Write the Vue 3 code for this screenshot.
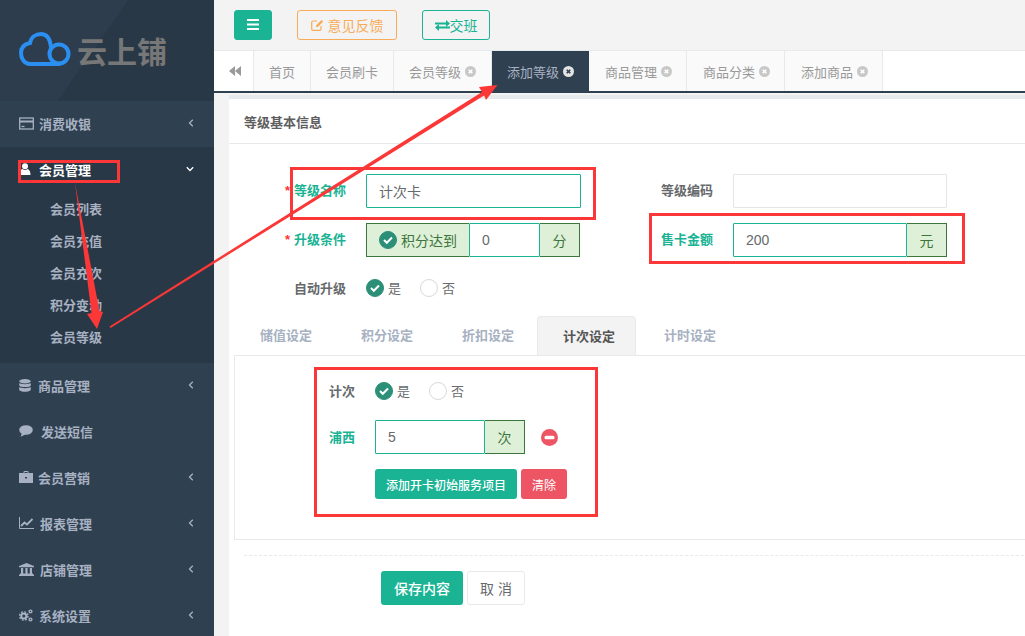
<script setup>
const menus = [
  { name: '商品管理', icon: 'db', gap: 7, arrow: true },
  { name: '发送短信', icon: 'msg', gap: 8, arrow: false },
  { name: '会员营销', icon: 'bag', gap: 5, arrow: true },
  { name: '报表管理', icon: 'chart', gap: 6, arrow: true },
  { name: '店铺管理', icon: 'bank', gap: 6, arrow: true },
  { name: '系统设置', icon: 'cogs', gap: 6, arrow: true },
];
const subMenus = ['会员列表', '会员充值', '会员充次', '积分变动', '会员等级'];
const tabs = [
  { name: '首页' },
  { name: '会员刷卡' },
  { name: '会员等级', close: true },
  { name: '添加等级', close: true, active: true },
  { name: '商品管理', close: true },
  { name: '商品分类', close: true },
  { name: '添加商品', close: true },
];
const formTabs = ['储值设定', '积分设定', '折扣设定', '计次设定', '计时设定'];
</script>

<template>
  <div class="page">
    <aside class="sidebar">
      <div class="logo">
        <svg class="logo-mark" width="54" height="37" viewBox="0 0 54 37" fill="none" stroke="#2a8ff0" stroke-width="4">
          <path d="M41 33H12C6 33 3 27 3 22C3 16 7 13 12 12C13 6 18 3 23 3C28 3 32 7 33 16" stroke-linecap="round" />
          <circle cx="41" cy="23" r="9.500" />
        </svg>
        <span class="logo-text">云上铺</span>
      </div>
      <div class="menu-item">
        <svg class="menu-icon" width="15" height="13" viewBox="0 0 15 13" fill="none" stroke="#a7b1c2" stroke-width="1.300">
          <rect x="0.700" y="1" width="13.600" height="11" />
          <path d="M1 4.500h13" stroke-width="2" />
          <path d="M2.500 9.500h3" />
        </svg>
        <span class="menu-name first">消费收银</span>
        <span class="chevron">
          <svg width="6" height="8" viewBox="0 0 6 8" fill="none" stroke="#a7b1c2" stroke-width="1.300"><path d="M4.800 0.800 1.500 4l3.300 3.200" /></svg>
        </span>
      </div>
      <div class="menu-open">
        <div class="menu-head">
          <svg class="menu-icon" width="12" height="12" viewBox="0 0 12 12" fill="#fff">
            <circle cx="6" cy="3.200" r="3" />
            <path d="M0.500 12 C0.500 8 2 6.500 3.500 6 C5 7.200 7 7.200 8.500 6 C10 6.500 11.500 8 11.500 12Z" />
          </svg>
          <span class="menu-name head-name">会员管理</span>
          <span class="chevron">
            <svg width="8" height="6" viewBox="0 0 8 6" fill="none" stroke="#fff" stroke-width="1.300"><path d="M0.800 1.200 4 4.500l3.200-3.300" /></svg>
          </span>
        </div>
        <div v-for="sub in subMenus" :key="sub" class="sub-item">{{ sub }}</div>
      </div>
      <div v-for="m in menus" :key="m.name" class="menu-item">
        <svg v-if="m.icon === 'db'" class="menu-icon" width="12" height="13" viewBox="0 0 12 13" fill="#a7b1c2">
          <ellipse cx="6" cy="2.200" rx="5.800" ry="2.200" />
          <path d="M0.200 4c1 1.500 10.600 1.500 11.600 0v2.500c-1 2-10.600 2-11.600 0zM0.200 8c1 1.500 10.600 1.500 11.600 0v2.700c-1 2.800-10.600 2.800-11.600 0z" />
        </svg>
        <svg v-else-if="m.icon === 'msg'" class="menu-icon" width="14" height="12" viewBox="0 0 14 12" fill="#a7b1c2">
          <ellipse cx="7" cy="5" rx="6.800" ry="4.800" />
          <path d="M3 8 1.500 11.800 6.500 9.500z" />
        </svg>
        <svg v-else-if="m.icon === 'bag'" class="menu-icon" width="14" height="12" viewBox="0 0 14 12" fill="#a7b1c2">
          <path fill-rule="evenodd" d="M4.500 2V1a1 1 0 0 1 1-1h3a1 1 0 0 1 1 1v1H14v10H0V2zM5.500 1v1h3V1zM6 6v1.500h2V6z" />
        </svg>
        <svg v-else-if="m.icon === 'chart'" class="menu-icon" width="15" height="12" viewBox="0 0 15 12" fill="none" stroke="#a7b1c2">
          <path d="M0.500 0v11.500H15" />
          <path d="M2 9 5.500 5.500 8 7.500 13.500 2" stroke-width="1.800" />
        </svg>
        <svg v-else-if="m.icon === 'bank'" class="menu-icon" width="15" height="13" viewBox="0 0 15 13" fill="#a7b1c2">
          <path d="M7.500 0 15 3v1.200H0V3zM1 10.500h13V12H1zM0 11.500h15V13H0zM2 5h2.200v5.500H2zM6.400 5h2.200v5.500H6.400zM10.800 5H13v5.500h-2.200z" />
        </svg>
        <svg v-else class="menu-icon" width="14" height="13" viewBox="0 0 14 13" fill="none" stroke="#a7b1c2">
          <circle cx="4.800" cy="7" r="2.600" stroke-width="2" />
          <circle cx="4.800" cy="7" r="4.200" stroke-width="1.400" stroke-dasharray="1.800 1.500" />
          <circle cx="11.500" cy="2.500" r="1.400" stroke-width="1.400" />
          <circle cx="11.500" cy="10.500" r="1.400" stroke-width="1.400" />
        </svg>
        <span class="menu-name" :style="{ marginLeft: m.gap + 'px' }">{{ m.name }}</span>
        <span v-if="m.arrow" class="chevron">
          <svg width="6" height="8" viewBox="0 0 6 8" fill="none" stroke="#a7b1c2" stroke-width="1.300"><path d="M4.800 0.800 1.500 4l3.300 3.200" /></svg>
        </span>
      </div>
    </aside>

    <main class="main">
      <header class="topbar">
        <button class="btn-bars">
          <svg width="12" height="11" viewBox="0 0 12 11" fill="#fff"><path d="M0 0h12v2H0zM0 4.500h12v2H0zM0 9h12v2H0z" /></svg>
        </button>
        <button class="btn-feedback">
          <svg width="13" height="12" viewBox="0 0 13 12" fill="none" stroke="#f8ac59" stroke-width="1.200">
            <path d="M10 7v3a1.400 1.400 0 0 1-1.400 1.400H2A1.400 1.400 0 0 1 0.700 10V3.500A1.400 1.400 0 0 1 2 2h4" />
            <path d="M5 8.200 5.400 6 10.500 1l1.700 1.600L7.200 7.800z" fill="#f8ac59" stroke="none" />
          </svg>
          意见反馈
        </button>
        <button class="btn-shift">
          <svg width="15" height="11" viewBox="0 0 15 11" fill="#1ab394">
            <path d="M0 2.500h11V0l4 3.500L11 7V4.500H0zM15 6.500H4V4L0 7.500 4 11V8.500h11z" />
          </svg>交班
        </button>
      </header>

      <nav class="tabbar">
        <div class="tab-back">
          <svg width="12" height="10" viewBox="0 0 12 10" fill="#999"><path d="M6 0v10L0 5zM12 0v10L6 5z" /></svg>
        </div>
        <div v-for="t in tabs" :key="t.name" class="tab-cell" :class="{ active: t.active }">
          {{ t.name }}
          <svg v-if="t.close" class="tab-close" width="11" height="11" viewBox="0 0 11 11">
            <circle cx="5.500" cy="5.500" r="5.500" :fill="t.active ? '#e4e4e4' : '#c8c8c8'" />
            <path d="M3.700 3.700 7.300 7.300M7.300 3.700 3.700 7.300" :stroke="t.active ? '#2f4050' : '#fff'" stroke-width="1.600" />
          </svg>
        </div>
      </nav>

      <section class="card">
        <div class="card-title">等级基本信息</div>
        <div class="card-body">
          <div class="form-grid">
            <label class="req green"><i>*</i>等级名称</label>
            <div class="field"><input class="input focus" value="计次卡" /></div>
            <label class="plain">等级编码</label>
            <div class="field"><input class="input" /></div>

            <label class="req green"><i>*</i>升级条件</label>
            <div class="field short">
              <span class="addon addon-check">
                <span class="radio on"><svg width="12" height="10" viewBox="0 0 12 10" fill="none" stroke="#fff" stroke-width="2"><path d="M2 5l2.800 2.800L10 2.500" /></svg></span>
                积分达到
              </span>
              <input class="input focus grow" value="0" />
              <span class="addon addon-unit">分</span>
            </div>
            <label class="green-bold">售卡金额</label>
            <div class="field">
              <input class="input focus grow" value="200" />
              <span class="addon addon-unit">元</span>
            </div>
          </div>

          <div class="auto-row">
            <label class="plain auto-label">自动升级</label>
            <span class="radio on"><svg width="12" height="10" viewBox="0 0 12 10" fill="none" stroke="#fff" stroke-width="2"><path d="M2 5l2.800 2.800L10 2.500" /></svg></span>
            <span class="radio-text">是</span>
            <span class="radio"></span>
            <span class="radio-text">否</span>
          </div>

          <div class="form-tabs">
            <div v-for="t in formTabs" :key="t" class="form-tab" :class="{ current: t === '计次设定' }">{{ t }}</div>
          </div>
          <div class="panel">
            <div class="panel-row">
              <label class="panel-label">计次</label>
              <span class="radio on"><svg width="12" height="10" viewBox="0 0 12 10" fill="none" stroke="#fff" stroke-width="2"><path d="M2 5l2.800 2.800L10 2.500" /></svg></span>
              <span class="radio-text">是</span>
              <span class="radio"></span>
              <span class="radio-text">否</span>
            </div>
            <div class="panel-row service">
              <label class="panel-label green-bold">浦西</label>
              <div class="field times">
                <input class="input focus grow" value="5" />
                <span class="addon addon-unit">次</span>
              </div>
              <svg class="minus" width="17" height="17" viewBox="0 0 17 17">
                <circle cx="8.500" cy="8.500" r="8.500" fill="#ed5565" />
                <rect x="3.500" y="6.700" width="10" height="3.600" rx="1.500" fill="#fff" />
              </svg>
            </div>
            <div class="panel-actions">
              <button class="btn-add">添加开卡初始服务项目</button>
              <button class="btn-clear">清除</button>
            </div>
          </div>

          <div class="dashed"></div>
          <div class="form-actions">
            <button class="btn-save">保存内容</button>
            <button class="btn-cancel">取 消</button>
          </div>
        </div>
      </section>
    </main>

    <!-- red annotations drawn on top of the screenshot -->
    <svg class="marks" width="1025" height="636" viewBox="0 0 1025 636">
      <g fill="none" stroke="#fb3737" stroke-width="3">
        <rect x="19.500" y="161.500" width="99" height="20" />
        <rect x="291.500" y="168.500" width="303" height="50" />
        <rect x="650.500" y="214.500" width="313" height="48" />
        <rect x="315.500" y="368.500" width="281" height="147" />
      </g>
      <g fill="#fb3737">
        <path d="M75 183 99.500 311 103 312 97 329 87 314 91.500 313z" />
        <path d="M109.500 326.500 482 92 479 87 497.500 85 486 100 484 95.500 110.500 328z" />
      </g>
    </svg>
  </div>
</template>

<style>
html,
body {
  margin: 0;
  overflow: hidden;
}
</style>

<style scoped>
.page {
  position: relative;
  display: flex;
  width: 1025px;
  height: 636px;
  overflow: hidden;
  font-family: "Liberation Sans", "Noto Sans CJK SC", sans-serif;
  font-size: 13px;
  color: #676a6c;
  background: #f3f3f4;
}

.sidebar {
  flex: none;
  width: 214px;
  background: #2f4050;
}
.logo {
  display: flex;
  align-items: center;
  height: 101px;
  padding: 0 0 0 18px;
  box-sizing: border-box;
  background: linear-gradient(125deg, #2d3d4d 0 45%, #293846 45% 100%);
}
.logo-mark {
  margin-top: -2px;
}
.logo-text {
  margin-left: 5px;
  margin-top: 5px;
  font-size: 30px;
  line-height: 36px;
  font-weight: 700;
  color: #777;
}
.menu-item,
.menu-head {
  display: flex;
  align-items: center;
  height: 46px;
  padding: 0 0 2px 19px;
  box-sizing: border-box;
  font-weight: 700;
  color: #a7b1c2;
}
.menu-name.first {
  margin-left: 5px;
}
.head-name {
  margin-left: 8px;
  color: #fff;
}
.chevron {
  display: flex;
  margin-left: auto;
  margin-right: 20px;
}
.menu-open {
  height: 216px;
  background: #293846;
}
.sub-item {
  height: 32px;
  padding-left: 50px;
  line-height: 34px;
  font-weight: 700;
  color: #a7b1c2;
}

.main {
  flex: 1;
  min-width: 0;
}
.topbar {
  display: flex;
  align-items: center;
  height: 50px;
  padding-left: 20px;
  box-sizing: border-box;
}
button {
  font-family: inherit;
  font-size: 13px;
  border-radius: 3px;
  padding: 0;
  box-sizing: border-box;
}
.btn-bars {
  width: 38px;
  height: 30px;
  border: 1px solid #1ab394;
  background: #1ab394;
}
.btn-feedback {
  width: 100px;
  height: 30px;
  margin-left: 25px;
  border: 1px solid #f8ac59;
  background: transparent;
  color: #f8ac59;
  font-size: 14px;
}
.btn-shift {
  width: 68px;
  height: 30px;
  margin-left: 25px;
  border: 1px solid #1ab394;
  background: transparent;
  color: #1ab394;
  font-size: 14px;
}
.tabbar {
  display: flex;
  height: 43px;
  box-sizing: border-box;
  background: #fff;
  border-top: 1px solid #e7eaec;
  border-bottom: 2px solid #2f4050;
}
.tab-back {
  display: flex;
  align-items: center;
  justify-content: center;
  width: 40px;
  padding-left: 2px;
  border-right: 1px solid #e7eaec;
  box-sizing: border-box;
}
.tab-cell {
  display: flex;
  align-items: center;
  padding: 0 15px;
  background: #fafafa;
  border-right: 1px solid #e7eaec;
  color: #999;
}
.tab-close {
  margin-left: 4px;
}
.tab-cell.active {
  background: #2f4050;
  border-right: 0;
  color: #a7b1c2;
}
.tab-cell.active ~ .tab-cell {
  padding: 0 14px 0 16px;
}

.card {
  width: 820px;
  margin: 2px 0 0 15px;
  height: 600px;
  background: #fff;
  border-top: 4px solid #e7eaec;
}
.card-title {
  height: 45px;
  padding-left: 15px;
  box-sizing: border-box;
  line-height: 48px;
  font-weight: 700;
  color: #5e5e5e;
  border-bottom: 1px solid #e7eaec;
}
.card-body {
  padding: 30px 0 0 5px;
}
.form-grid {
  display: grid;
  grid-template-columns: 81px 215px 152px 214px;
  grid-auto-rows: 34px;
  row-gap: 15px;
  padding-left: 51px;
  align-items: center;
}
.form-grid label {
  padding-bottom: 4px;
}
.form-grid .plain,
.form-grid .green-bold {
  margin-left: 80px;
}
.req,
.plain,
.green-bold,
.panel-label {
  padding-bottom: 2px;
  font-weight: 700;
  white-space: nowrap;
}
.plain {
  color: #676a6c;
}
.green,
.green-bold {
  color: #1ab394;
}
.req i {
  margin-right: 4px;
  font-style: normal;
  color: #f33;
}
.field {
  display: flex;
  height: 34px;
}
.field.short {
  width: 214px;
}
.input {
  width: 100%;
  min-width: 0;
  height: 34px;
  padding: 0 12px;
  box-sizing: border-box;
  border: 1px solid #e5e6e7;
  border-radius: 1px;
  outline: none;
  font-family: inherit;
  font-size: 14px;
  color: #676a6c;
}
.input.focus {
  border-color: #1ab394;
}
.input.grow {
  flex: 1;
}
.addon {
  display: flex;
  flex: none;
  align-items: center;
  justify-content: center;
  box-sizing: border-box;
  height: 34px;
  background: #dff0d8;
  border: 1px solid #3c763d;
  color: #3c763d;
  font-size: 14px;
}
.addon-check {
  width: 103px;
  gap: 4px;
  border-right: 0;
}
.addon-unit {
  width: 40px;
  border-left: 0;
}
.radio {
  display: inline-flex;
  flex: none;
  align-items: center;
  justify-content: center;
  width: 18px;
  height: 18px;
  box-sizing: border-box;
  border: 1px solid #d9d9d9;
  border-radius: 50%;
  background: #fff;
}
.radio.on {
  border-color: #2c8f78;
  background: #2c8f78;
}
.radio-text {
  margin: 0 19px 2px 4px;
  font-size: 13px;
  color: #676a6c;
}
.auto-row {
  display: flex;
  align-items: center;
  height: 26px;
  margin-top: 18px;
  padding-left: 60px;
}
.auto-label {
  width: 72px;
}
.form-tabs {
  display: flex;
  gap: 2px;
  height: 39px;
  margin-top: 15px;
}
.form-tab {
  width: 99px;
  box-sizing: border-box;
  padding: 1px 0 0 5px;
  line-height: 38px;
  text-align: center;
  font-weight: 700;
  color: #a7b1c2;
}
.form-tab.current {
  border: 1px solid #e7eaec;
  border-bottom: 0;
  border-radius: 4px 4px 0 0;
  background: #f3f3f4;
  color: #555;
}
.panel {
  box-sizing: border-box;
  height: 185px;
  padding: 24px 0 0 94px;
  border: 1px solid #e7eaec;
}
.panel-row {
  display: flex;
  align-items: center;
  height: 22px;
}
.panel-label {
  width: 46px;
}
.panel-row.service {
  height: 34px;
  margin-top: 18px;
}
.field.times {
  width: 150px;
}
.minus {
  margin-left: 16px;
}
.panel-actions {
  display: flex;
  gap: 4px;
  margin: 15px 0 0 46px;
}
.btn-add {
  width: 142px;
  height: 30px;
  border: 0;
  background: #1ab394;
  color: #fff;
  font-size: 12px;
  font-weight: 500;
}
.btn-clear {
  width: 46px;
  height: 30px;
  border: 0;
  background: #ed5565;
  color: #fff;
  font-size: 12px;
}
.dashed {
  margin: 15px 0 0 10px;
  border-top: 1px dashed #e7eaec;
}
.form-actions {
  display: flex;
  gap: 4px;
  margin: 15px 0 0 147px;
}
.btn-save {
  width: 82px;
  height: 34px;
  border: 0;
  background: #1ab394;
  color: #fff;
  font-size: 14px;
  font-weight: 500;
}
.btn-cancel {
  width: 58px;
  height: 34px;
  border: 1px solid #e7eaec;
  background: #fff;
  color: #676a6c;
  font-size: 14px;
}

.marks {
  position: absolute;
  top: 0;
  left: 0;
  pointer-events: none;
}
</style>
